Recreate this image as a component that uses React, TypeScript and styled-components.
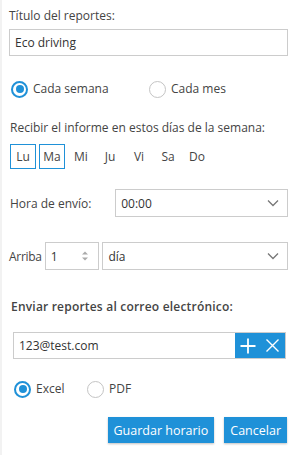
import React, { useState } from 'react'
import styled, { createGlobalStyle } from 'styled-components'

const BLUE = '#1f91d8'

const GlobalStyle = createGlobalStyle`
	html, body {
		margin: 0;
		padding: 0;
		background: #fff;
	}
	body {
		font-family: 'Open Sans', 'Liberation Sans', sans-serif;
		font-size: 12px;
		color: #444;
	}
	* {
		box-sizing: border-box;
	}
`

const days = ['Lu', 'Ma', 'Mi', 'Ju', 'Vi', 'Sa', 'Do']

const Chevron = () => (
	<svg width="12" height="8" viewBox="0 0 12 8">
		<path d="M1 1.5 L6 6.5 L11 1.5" fill="none" stroke="#777" strokeWidth="1.3" />
	</svg>
)

interface RadioProps {
	checked: boolean
	label: string
	onClick: () => void
}

const Radio = ({ checked, label, onClick }: RadioProps) => (
	<RadioLabel onClick={onClick}>
		<RadioCircle $checked={checked} />
		{label}
	</RadioLabel>
)

const App = () => {
	const [period, setPeriod] = useState('week')
	const [format, setFormat] = useState('excel')
	const [selectedDays, setSelectedDays] = useState<string[]>(['Lu', 'Ma'])

	const toggleDay = (d: string) =>
		setSelectedDays((s) => (s.includes(d) ? s.filter((x) => x !== d) : [...s, d]))

	return (
		<Panel>
			<GlobalStyle />
			<Label>Título del reportes:</Label>
			<TextInput>Eco driving</TextInput>

			<RadioRow $itemWidth={138} $top={24} $indent={0}>
				<Radio checked={period === 'week'} label="Cada semana" onClick={() => setPeriod('week')} />
				<Radio checked={period === 'month'} label="Cada mes" onClick={() => setPeriod('month')} />
			</RadioRow>

			<DaysLabel>Recibir el informe en estos días de la semana:</DaysLabel>
			<Days>
				{days.map((d) => (
					<Day key={d} $active={selectedDays.includes(d)} onClick={() => toggleDay(d)}>
						{d}
					</Day>
				))}
			</Days>

			<HourRow>
				<HourLabel>Hora de envío:</HourLabel>
				<Select $width={174}>
					<span>00:00</span>
					<Chevron />
				</Select>
			</HourRow>

			<RepeatRow>
				<RepeatLabel>Arriba</RepeatLabel>
				<NumberBox>
					<span>1</span>
					<Spinner>
						<svg width="8" height="12" viewBox="0 0 8 12">
							<path d="M4 1.5 L7 4.5 H1 Z" fill="#aaa" />
							<path d="M4 10.5 L7 7.5 H1 Z" fill="#aaa" />
						</svg>
					</Spinner>
				</NumberBox>
				<Select $width={187}>
					<span>día</span>
					<Chevron />
				</Select>
			</RepeatRow>

			<SectionTitle>Enviar reportes al correo electrónico:</SectionTitle>
			<EmailRow>
				<EmailText>123@test.com</EmailText>
				<EmailActions>
					<svg width="18" height="18" viewBox="0 0 18 18">
						<path d="M9 1.5 V16.5 M1.5 9 H16.5" stroke="#fff" strokeWidth="1.8" />
					</svg>
					<svg width="15" height="15" viewBox="0 0 15 15">
						<path d="M1.5 1.5 L13.5 13.5 M13.5 1.5 L1.5 13.5" stroke="#fff" strokeWidth="1.4" />
					</svg>
				</EmailActions>
			</EmailRow>

			<RadioRow $itemWidth={73} $top={21} $indent={3}>
				<Radio checked={format === 'excel'} label="Excel" onClick={() => setFormat('excel')} />
				<Radio checked={format === 'pdf'} label="PDF" onClick={() => setFormat('pdf')} />
			</RadioRow>

			<Actions>
				<Button>Guardar horario</Button>
				<Button>Cancelar</Button>
			</Actions>
		</Panel>
	)
}

const Panel = styled.div`
	width: 298px;
	height: 455px;
	padding: 7px 10px 0 9px;
	border-left: 2px solid #f2f2f2;
	display: flex;
	flex-direction: column;
`
const Label = styled.div`
	line-height: 18px;
	margin-left: -2px;
`
const TextInput = styled.div`
	margin-top: 4px;
	height: 27px;
	border: 1px solid #ccc;
	padding: 0 5px;
	display: flex;
	align-items: center;
	margin-left: -2px;
	color: #333;
`
const RadioRow = styled.div<{ $itemWidth: number; $top: number; $indent: number }>`
	display: flex;
	align-items: center;
	margin-top: ${(p) => p.$top}px;
	margin-left: ${(p) => p.$indent}px;
	& > :first-child {
		width: ${(p) => p.$itemWidth}px;
	}
`
const RadioLabel = styled.label`
	display: flex;
	align-items: center;
	gap: 5px;
	white-space: nowrap;
	cursor: pointer;
	line-height: 18px;
`
const RadioCircle = styled.span<{ $checked: boolean }>`
	flex: 0 0 auto;
	width: 17px;
	height: 17px;
	border-radius: 50%;
	border: ${(p) => (p.$checked ? `2px solid ${BLUE}` : '1px solid #c4c4c4')};
	position: relative;
	&::after {
		content: '';
		display: ${(p) => (p.$checked ? 'block' : 'none')};
		position: absolute;
		left: 2.5px;
		top: 2.5px;
		width: 8px;
		height: 8px;
		border-radius: 50%;
		background: ${BLUE};
	}
`
const DaysLabel = styled.div`
	margin-top: 21px;
	line-height: 18px;
	margin-left: -1px;
`
const Days = styled.div`
	display: flex;
	gap: 3px;
	margin-top: 7px;
	margin-left: -1px;
`
const Day = styled.div<{ $active: boolean }>`
	width: 26px;
	height: 25px;
	display: flex;
	align-items: center;
	justify-content: center;
	border: 1px solid ${(p) => (p.$active ? BLUE : 'transparent')};
	cursor: pointer;
`
const HourRow = styled.div`
	display: flex;
	align-items: center;
	margin-top: 20px;
	margin-left: -1px;
`
const HourLabel = styled.div`
	width: 106px;
`
const Select = styled.div<{ $width: number }>`
	width: ${(p) => p.$width}px;
	height: 28px;
	border: 1px solid #ccc;
	display: flex;
	align-items: center;
	justify-content: space-between;
	padding: 0 8px 0 5px;
	color: #333;
`
const RepeatRow = styled.div`
	display: flex;
	align-items: center;
	margin-top: 25px;
	margin-left: -2px;
`
const RepeatLabel = styled.div`
	letter-spacing: -0.3px;
	width: 36px;
`
const NumberBox = styled.div`
	width: 55px;
	height: 28px;
	border: 1px solid #ccc;
	display: flex;
	align-items: center;
	justify-content: space-between;
	padding: 0 9px 0 5px;
	margin-right: 3px;
	color: #333;
`
const Spinner = styled.span`
	display: flex;
	align-items: center;
`
const SectionTitle = styled.div`
	margin-top: 28px;
	font-weight: 600;
	line-height: 18px;
	letter-spacing: 0.2px;
`
const EmailRow = styled.div`
	margin-top: 16px;
	margin-left: 2px;
	margin-right: 2px;
	height: 27px;
	border: 1px solid #ccc;
	display: flex;
	align-items: stretch;
`
const EmailText = styled.div`
	flex: 1;
	display: flex;
	align-items: center;
	padding: 0 5px;
	color: #333;
`
const EmailActions = styled.div`
	width: 50px;
	background: ${BLUE};
	display: flex;
	align-items: center;
	justify-content: space-between;
	padding: 0 5px 0 4px;
`
const Actions = styled.div`
	display: flex;
	justify-content: flex-end;
	gap: 10px;
	margin-top: 19px;
	margin-right: 1px;
`
const Button = styled.button`
	height: 26px;
	padding: 0 6px;
	border: none;
	background: ${BLUE};
	color: #fff;
	font-family: inherit;
	font-size: 12.5px;
	box-shadow: 0 1px 2px rgba(0, 0, 0, 0.25);
	cursor: pointer;
`

export default App
